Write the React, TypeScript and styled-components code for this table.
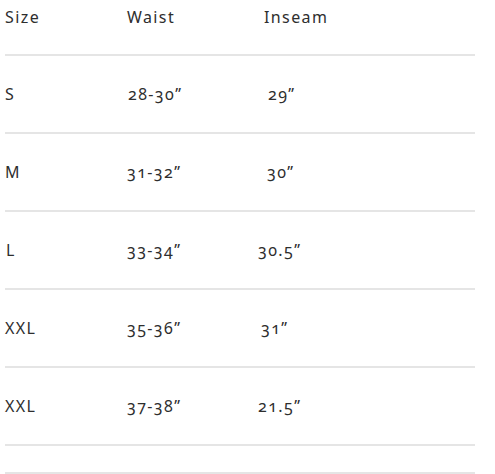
import React from 'react'
import styled, { createGlobalStyle } from 'styled-components'

const GlobalStyle = createGlobalStyle`
  html, body {
    margin: 0;
    padding: 0;
    background: #ffffff;
  }
`

const Chart = styled.div`
  width: 470px;
  padding: 0 0 0 5px;
  font-family: 'Noto Sans', 'Open Sans', sans-serif;
  font-variant-numeric: oldstyle-nums;
  font-size: 16px;
  letter-spacing: 1.4px;
  color: #2e2e2e;
`

const Row = styled.div<{ $height: number; $top?: number }>`
  display: grid;
  grid-template-columns: 122px 131px 1fr;
  align-items: ${({ $top }) => ($top !== undefined ? 'start' : 'center')};
  height: ${({ $height }) => $height}px;
  padding-top: ${({ $top }) => $top ?? 0}px;
  box-sizing: border-box;
  border-bottom: 2px solid #e5e5e5;
`

const Cell = styled.div<{ $shift?: number }>`
  padding-left: ${({ $shift }) => $shift ?? 0}px;
  line-height: 20px;
`

const rows = [
  { size: 'S', waist: '28-30”', inseam: '29”', shift: 10, waistShift: 1 },
  { size: 'M', waist: '31-32”', inseam: '30”', shift: 9, waistShift: 0 },
  { size: 'L', waist: '33-34”', inseam: '30.5”', shift: 0, waistShift: -1 },
  { size: 'XXL', waist: '35-36”', inseam: '31”', shift: 3, waistShift: 0 },
  { size: 'XXL', waist: '37-38”', inseam: '21.5”', shift: 0, waistShift: -1 },
]

export default function App() {
  return (
    <>
      <GlobalStyle />
      <Chart>
        <Row $height={56} $top={7}>
          <Cell>Size</Cell>
          <Cell>Waist</Cell>
          <Cell $shift={6}>Inseam</Cell>
        </Row>
        {rows.map((r, i) => (
          <Row key={i} $height={78}>
            <Cell $shift={r.size === 'L' ? 1 : 0}>{r.size}</Cell>
            <Cell $shift={r.waistShift}>{r.waist}</Cell>
            <Cell $shift={r.shift}>{r.inseam}</Cell>
          </Row>
        ))}
        <Row $height={28} />
      </Chart>
    </>
  )
}
